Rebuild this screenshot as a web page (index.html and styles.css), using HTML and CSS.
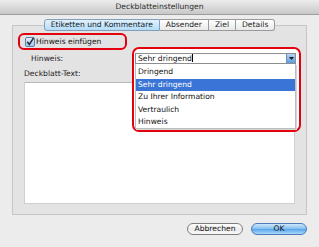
FILE: index.html
```html
<!DOCTYPE html>
<html lang="de">
<head>
    <meta charset="UTF-8">
    <meta name="viewport" content="width=device-width, initial-scale=1.0">
    <title>Deckblatteinstellungen</title>
    <link rel="stylesheet" href="styles.css">
</head>
<body>
    <div class="window">
        <div class="titlebar">Deckblatteinstellungen</div>

        <div class="content">
            <div class="tabs">
                <span class="tab active">Etiketten und Kommentare</span>
                <span class="tab">Absender</span>
                <span class="tab">Ziel</span>
                <span class="tab">Details</span>
            </div>

            <div class="panel">
                <label class="note-check">
                    <svg class="checkbox" width="10" height="10" viewBox="0 0 10 10">
                        <defs>
                            <linearGradient id="cbFill" x1="0" y1="0" x2="0" y2="1">
                                <stop offset="0" stop-color="#e6f2fd"/>
                                <stop offset="1" stop-color="#9cc8ef"/>
                            </linearGradient>
                        </defs>
                        <rect x="0.5" y="0.5" width="9" height="9" rx="1.5" fill="url(#cbFill)" stroke="#5f7fa6"/>
                        <path d="M2.2 4.8 L4.3 7.4 L8.6 0.8" fill="none" stroke="#1d2a3a" stroke-width="1.5"/>
                    </svg>
                    <span>Hinweis einfügen</span>
                </label>

                <div class="field-row">
                    <span class="field-label">Hinweis:</span>

                    <!-- open popup menu, drawn over the text area -->
                    <div class="menu-wrap">
                        <div class="combo">
                            <span class="combo-text">Sehr dringend<span class="caret"></span></span>
                            <span class="combo-btn">
                                <svg width="5" height="3" viewBox="0 0 5 3"><path d="M0 0 H5 L2.5 3 Z" fill="#1a1a1a"/></svg>
                            </span>
                        </div>
                        <ul class="menu">
                            <li>Dringend</li>
                            <li class="selected">Sehr dringend</li>
                            <li>Zu Ihrer Information</li>
                            <li>Vertraulich</li>
                            <li>Hinweis</li>
                        </ul>
                    </div>
                </div>

                <div class="text-label">Deckblatt-Text:</div>
                <div class="text-area"></div>
            </div>

            <div class="buttons">
                <button class="btn">Abbrechen</button>
                <button class="btn primary">OK</button>
            </div>
        </div>
    </div>
</body>
</html>
```

FILE: styles.css
```css
* {
    box-sizing: border-box;
}
body {
    margin: 0;
    background-color: #ececec;
    font-family: 'DejaVu Sans', 'Liberation Sans', sans-serif;
    font-size: 7.6px;
    color: #111;
}
.window {
    width: 319px;
    height: 247px;
    background-color: #ececec;
    overflow: hidden;
}
.titlebar {
    height: 15px;
    line-height: 14px;
    text-align: center;
    color: #2b2b2b;
    background: linear-gradient(#ececec, #c8c8c8);
    border-bottom: 1px solid #9d9d9d;
}
.content {
    padding: 4px 12px 0;
}
.tabs {
    display: flex;
    justify-content: center;
    position: relative;
    z-index: 2;
    height: 12px;
    margin-bottom: -6px;
}
.tab {
    height: 12px;
    line-height: 10px;
    padding: 0 6px;
    border: 1px solid #9a9a9a;
    border-left: none;
    background: linear-gradient(#ffffff, #e9e9e9);
    color: #1a1a1a;
}
.tab:first-child {
    border-left: 1px solid #9a9a9a;
    border-radius: 3px 0 0 3px;
}
.tab:last-child {
    border-radius: 0 3px 3px 0;
}
.tab.active {
    background: linear-gradient(#e3f1fc, #b5dcf6);
    border-color: #7f9fbf;
    color: #0b1a2a;
}
.panel {
    height: 190px;
    background-color: #e3e3e3;
    border: 1px solid #c6c6c6;
    padding: 7px 11px 10px;
}
.note-check {
    display: flex;
    align-items: center;
    gap: 1px;
    width: 109px;
    height: 17px;
    margin-left: -6px;
    padding-left: 5px;
    border: 2px solid #e3000f;
    border-radius: 6px;
}
.checkbox {
    flex-shrink: 0;
}
.field-row {
    position: relative;
    height: 11px;
    margin-top: 3px;
    z-index: 3;
}
.field-label {
    display: block;
    padding-left: 7px;
    line-height: 11px;
    color: #222;
}
.menu-wrap {
    position: absolute;
    left: 108px;
    top: -6px;
    width: 169px;
    height: 85px;
    padding: 4px 3px 0 1px;
    border: 2px solid #e3000f;
    border-radius: 7px;
    background-color: #fff;
}
.combo {
    display: flex;
    height: 11px;
    border: 1px solid #8e8e8e;
    background-color: #fff;
}
.combo-text {
    flex: 1;
    line-height: 9px;
    padding-left: 2px;
}
.caret {
    display: inline-block;
    width: 1px;
    height: 8px;
    background-color: #000;
    vertical-align: -1px;
}
.combo-btn {
    width: 9px;
    display: flex;
    align-items: center;
    justify-content: center;
    background: linear-gradient(#b5d5f3, #5c9be0);
    border-left: 1px solid #6c8db5;
}
.menu {
    list-style: none;
    margin: 0;
    padding: 2px 0 0;
    height: 65px;
    border: 1px solid #bdbdbd;
    border-top: none;
    box-shadow: 1px 1px 0 #d5d5d5;
}
.menu li {
    height: 12.5px;
    line-height: 12.5px;
    padding-left: 2px;
}
.menu li.selected {
    background-color: #3a74d6;
    color: #fff;
}
.text-label {
    margin-top: 4px;
    line-height: 11px;
    color: #222;
}
.text-area {
    height: 122px;
    margin-top: 3px;
    background-color: #fff;
    border: 1px solid #d0d0d0;
    border-top-color: #b8b8b8;
}
.buttons {
    display: flex;
    justify-content: flex-end;
    gap: 8px;
    margin-top: 8px;
}
.btn {
    width: 56px;
    height: 12px;
    padding: 0;
    font-family: inherit;
    font-size: 7.6px;
    line-height: 10px;
    color: #111;
    border: 1px solid #7d7d7d;
    border-radius: 6px;
    background: linear-gradient(#ffffff, #ececec 50%, #f8f8f8);
}
.btn.primary {
    border-color: #4d7cb8;
    background: linear-gradient(#cfe7fb, #7fbcf0 50%, #5ea8ec 55%, #a9d7fb);
}
```
